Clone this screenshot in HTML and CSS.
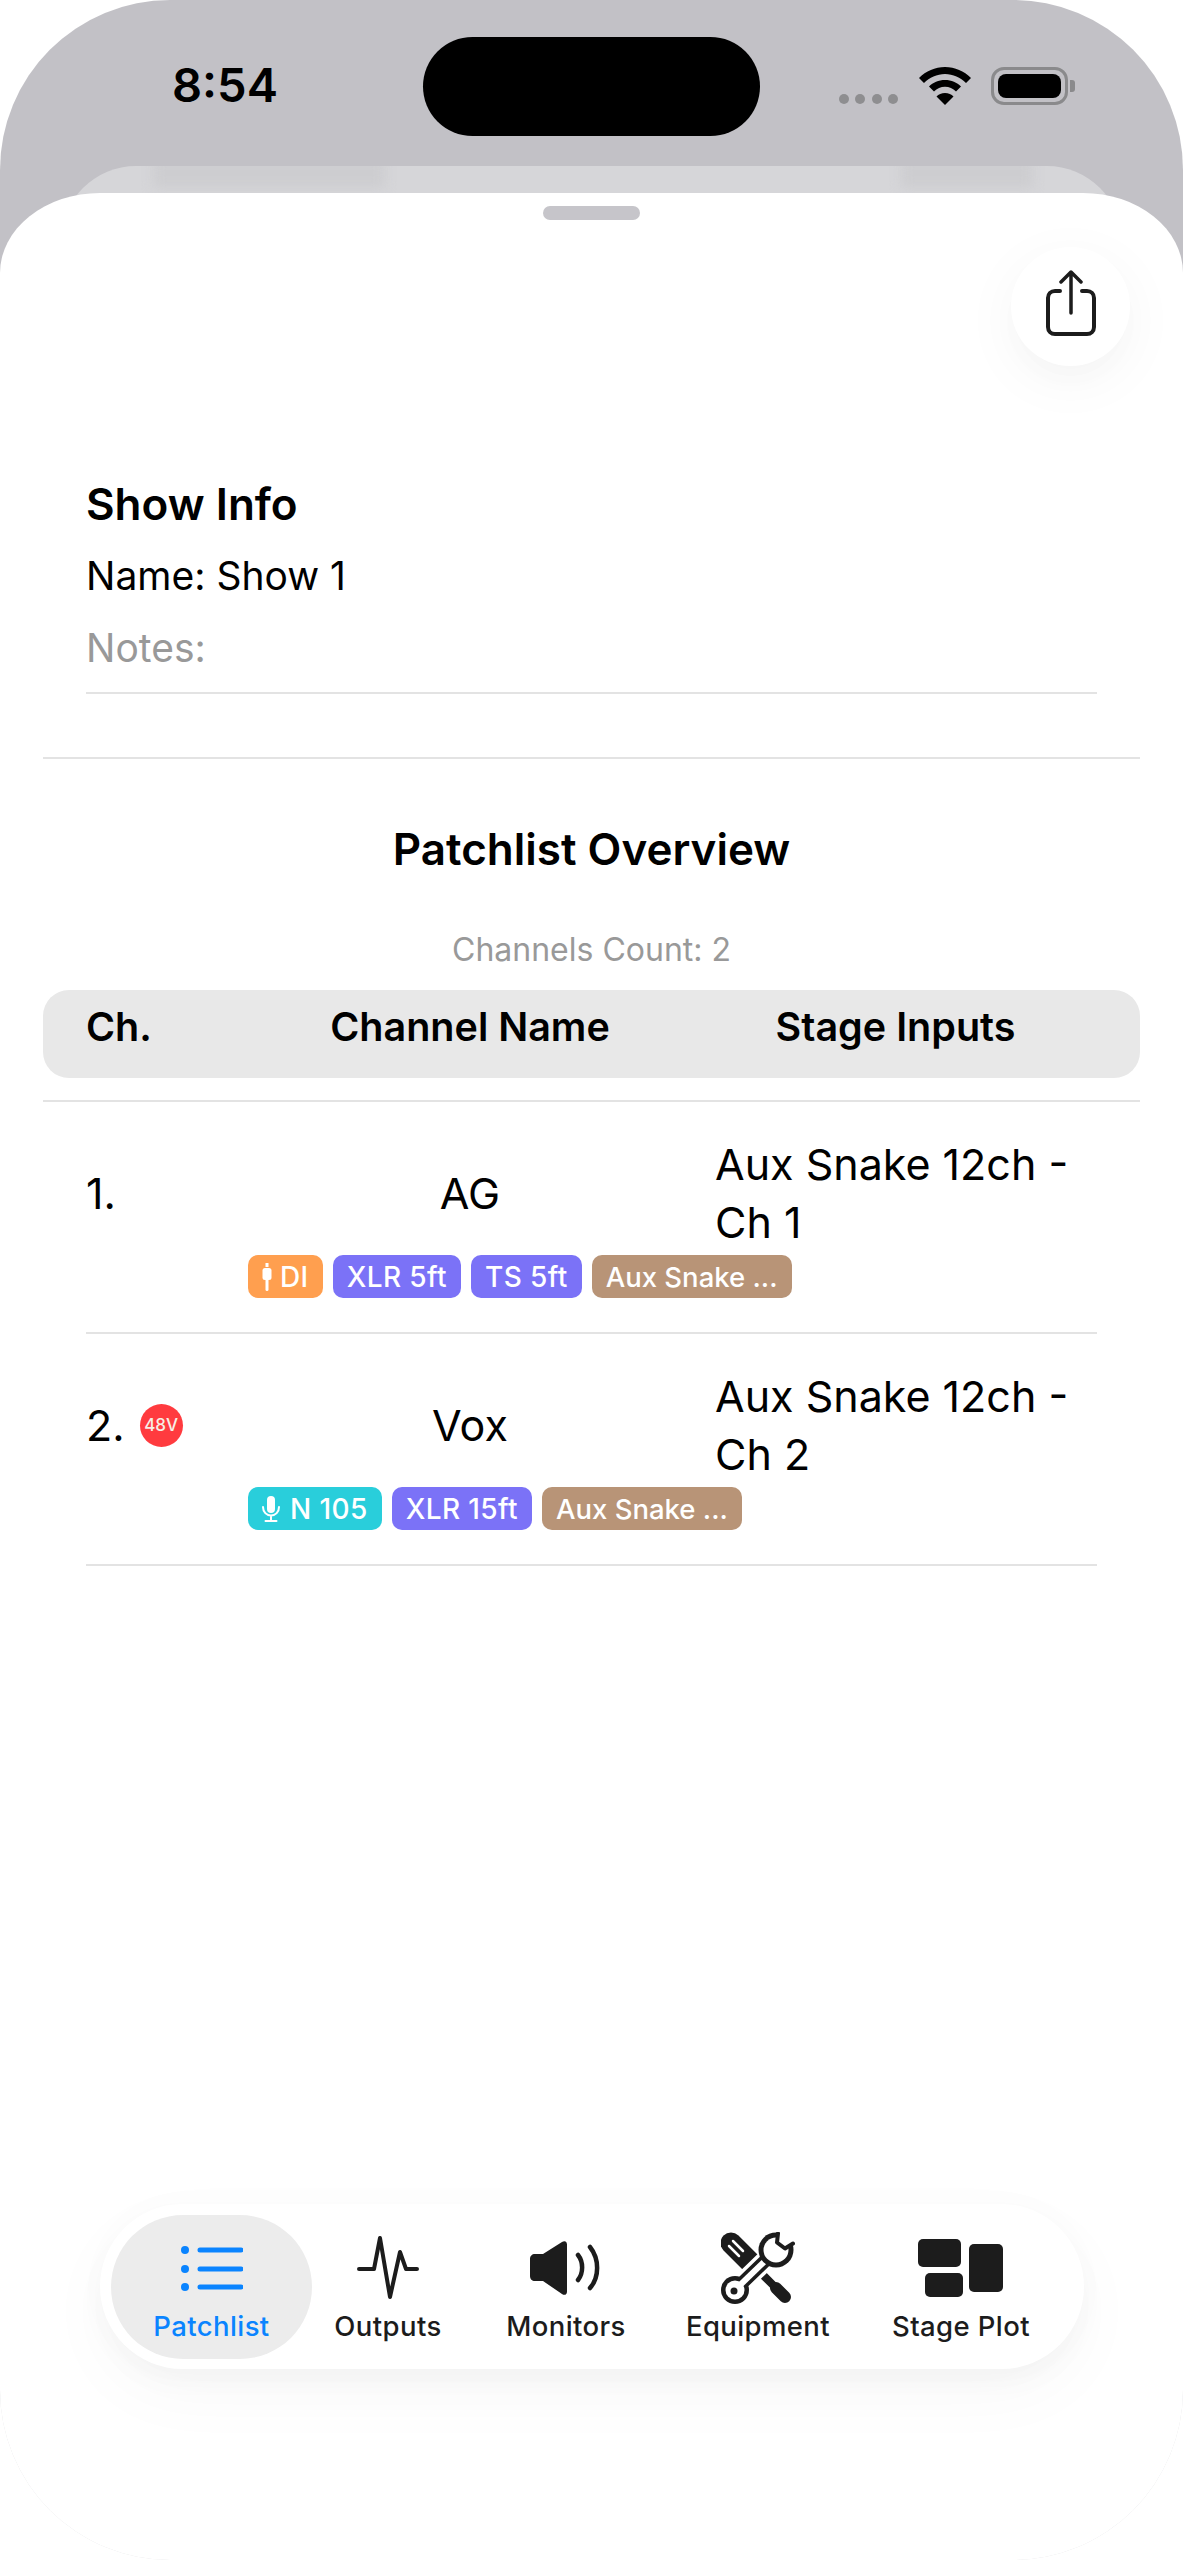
FILE: index.html
```html
<!DOCTYPE html>
<html lang="en">
<head>
  <meta charset="UTF-8" />
  <meta name="viewport" content="width=device-width, initial-scale=1.0" />
  <title>Patchlist Overview</title>
  <link rel="stylesheet" href="styles.css">
</head>
<body>
  <div class="screen">
    <!-- Status bar -->
    <div class="status-bar">
      <div class="time">8:54</div>
      <div class="island"></div>
      <div class="status-icons">
        <svg width="60" height="12" viewBox="0 0 60 12"><g fill="#8e8e90"><circle cx="5" cy="6" r="5"/><circle cx="21" cy="6" r="5"/><circle cx="38" cy="6" r="5"/><circle cx="54" cy="6" r="5"/></g></svg>
        <svg class="wifi" width="52" height="38" viewBox="0 0 52 38"><path d="M26 0C16 0 7 4 0 11l5 5c5.500-5.500 13-9 21-9s15.500 3.500 21 9l5-5C45 4 36 0 26 0z"/><path d="M26 13c-6.500 0-12 2.500-16 6.500l5 5c3-3 6.800-4.700 11-4.700s8 1.700 11 4.700l5-5C38 15.500 32.500 13 26 13z"/><path d="M26 26c-3.500 0-6.500 1.300-8.500 3.500L26 38l8.500-8.500C32.500 27.300 29.500 26 26 26z"/></svg>
        <div class="battery"><div class="battery-fill"></div></div>
        <div class="battery-nub"></div>
      </div>
    </div>

    <!-- Sheet behind the current one -->
    <div class="back-sheet">
      <div class="ghost ghost-left"></div>
      <div class="ghost ghost-right"></div>
    </div>

    <div class="sheet">
      <div class="handle"></div>

      <button class="share" aria-label="Share">
        <svg width="52" height="68" viewBox="0 0 52 68" fill="none" stroke="#1c1c1c" stroke-linecap="round" stroke-linejoin="round">
          <path d="M15 21H10c-4 0-7 3-7 7v29c0 4 3 7 7 7h32c4 0 7-3 7-7V28c0-4-3-7-7-7h-5" stroke-width="4"/>
          <path d="M26 43V3M16 12l10-10 10 10" stroke-width="3.500"/>
        </svg>
      </button>

      <div class="show-info">
        <div class="show-title">Show Info</div>
        <div class="show-line">Name: Show 1</div>
        <div class="show-line muted">Notes:</div>
      </div>

      <div class="divider"></div>

      <h2 class="overview-title">Patchlist Overview</h2>
      <div class="channel-count">Channels Count: 2</div>

      <div class="table-head">
        <div>Ch.</div>
        <div class="center">Channel Name</div>
        <div class="center">Stage Inputs</div>
      </div>
      <div class="table-rule"></div>

      <div class="row">
        <div class="row-main">
          <div class="ch">1.</div>
          <div class="center">AG</div>
          <div class="stage-input">Aux Snake 12ch - Ch 1</div>
        </div>
        <div class="pills">
          <span class="pill orange">
            <svg width="10" height="28" viewBox="0 0 10 28" fill="#fff"><rect x="3.500" y="0" width="3" height="4"/><rect x="0.500" y="5" width="9" height="12" rx="2.500"/><rect x="3.500" y="16" width="3" height="12" rx="1.500"/></svg>
            DI
          </span>
          <span class="pill purple">XLR 5ft</span>
          <span class="pill purple">TS 5ft</span>
          <span class="pill brown">Aux Snake ...</span>
        </div>
      </div>

      <div class="row">
        <div class="row-main">
          <div class="ch">2. <span class="phantom">48V</span></div>
          <div class="center">Vox</div>
          <div class="stage-input">Aux Snake 12ch - Ch 2</div>
        </div>
        <div class="pills">
          <span class="pill cyan">
            <svg width="18" height="26" viewBox="0 0 18 26" fill="none" stroke="#fff" stroke-width="2" stroke-linecap="round"><rect x="5" y="0" width="8" height="17" rx="4" fill="#fff" stroke="none"/><path d="M1 11c0 5 3.500 8.500 8 8.500s8-3.500 8-8.500M9 19.500V25M3.500 25h11"/></svg>
            N 105
          </span>
          <span class="pill purple">XLR 15ft</span>
          <span class="pill brown">Aux Snake ...</span>
        </div>
      </div>
    </div>

    <!-- Floating tab bar -->
    <nav class="tabbar">
      <div class="tab active">
        <div class="tab-icon">
          <svg width="62" height="46" viewBox="0 0 62 46" fill="#0a84ff" stroke="#0a84ff" stroke-linecap="round">
            <g stroke="none"><circle cx="4" cy="5" r="4"/><circle cx="4" cy="24" r="4"/><circle cx="4" cy="42" r="4"/></g>
            <path d="M19 5h41M19 24h41M19 42h41" stroke-width="5"/>
          </svg>
        </div>
        <span>Patchlist</span>
      </div>
      <div class="tab">
        <div class="tab-icon">
          <svg width="62" height="64" viewBox="0 0 62 64" fill="none" stroke="#1c1c1c" stroke-width="4" stroke-linecap="round" stroke-linejoin="round"><path d="M2 33h15l6-31 10 59 10-45 6 17h11"/></svg>
        </div>
        <span>Outputs</span>
      </div>
      <div class="tab">
        <div class="tab-icon">
          <svg width="72" height="56" viewBox="0 0 72 56" fill="#1c1c1c"><path d="M5 14h8L32 2c2.500-1.800 5-.7 5 2.500v47c0 3.200-2.500 4.300-5 2.500L13 41H5c-3 0-5-2-5-5V19c0-3 2-5 5-5z"/><path d="M48 15c5.500 7 5.500 18 0 25M60 7c9.500 12 9.500 30 0 41" fill="none" stroke="#1c1c1c" stroke-width="4.500" stroke-linecap="round"/></svg>
        </div>
        <span>Monitors</span>
      </div>
      <div class="tab">
        <div class="tab-icon">
          <svg width="74" height="72" viewBox="0 0 74 72" fill="none" stroke-linecap="round">
            <path d="M10 11l22 22" stroke="#1c1c1c" stroke-width="21"/>
            <path d="M32 33l20 20" stroke="#1c1c1c" stroke-width="8"/>
            <path d="M55 56l9 9" stroke="#1c1c1c" stroke-width="12"/>
            <path d="M12 9l10 10M8 14l10 10" stroke="#fff" stroke-width="2.500"/>
            <path d="M46 27L14 58" stroke="#fff" stroke-width="20"/>
            <path d="M46 27L14 58" stroke="#1c1c1c" stroke-width="13"/>
            <circle cx="14" cy="58" r="14" fill="#1c1c1c"/>
            <path d="M46 27L14 58" stroke="#fff" stroke-width="6"/>
            <circle cx="14" cy="58" r="9.500" fill="#fff"/>
            <circle cx="13" cy="59" r="3.500" fill="#1c1c1c"/>
            <circle cx="55" cy="18" r="17.500" fill="#1c1c1c"/>
            <circle cx="55" cy="18" r="12.500" fill="#fff"/>
            <path d="M58 -2L73 -2 73 11 66 17 57 11z" fill="#fff"/>
            <path d="M57 1.500l-1 9 8 6 8-5" stroke="#1c1c1c" stroke-width="4" stroke-linejoin="round"/>
          </svg>
        </div>
        <span>Equipment</span>
      </div>
      <div class="tab">
        <div class="tab-icon">
          <svg width="86" height="58" viewBox="0 0 86 58" fill="#1c1c1c"><rect x="0" y="0" width="43" height="28" rx="5"/><rect x="7" y="34" width="38" height="24" rx="5"/><rect x="51" y="5" width="34" height="48" rx="5"/></svg>
        </div>
        <span>Stage Plot</span>
      </div>
    </nav>
  </div>
</body>
</html>
```

FILE: styles.css
```css
/* Reset & Body */
* { box-sizing: border-box; margin: 0; padding: 0; }
html, body { width: 1183px; height: 2560px; background: #fff; overflow: hidden; }
body { font-family: Inter, "Noto Sans", sans-serif; color: #000; }

/* Device */
.screen {
  position: relative;
  width: 1183px; height: 2560px;
  background: linear-gradient(#c2c1c6 300px, #e9e9eb 300px);
  border-radius: 170px;
  overflow: hidden;
}

/* Status bar */
.status-bar {
  display: grid;
  grid-template-columns: 1fr 337px 1fr;
  height: 166px;
  padding-top: 37px;
}
.time {
  height: 99px;
  padding: 0 0 0 172px;
  font-size: 47px; font-weight: 600;
  line-height: 96px;
}
.island { height: 99px; background: #000; border-radius: 50px; }
.status-icons {
  display: flex; align-items: flex-end;
  height: 68px;
  padding-left: 79px;
}
.wifi { margin-left: 20px; }
.battery {
  width: 77px; height: 38px;
  margin-left: 20px;
  padding: 4px;
  border: 3px solid #8a8a8c;
  border-radius: 13px;
}
.battery-fill { width: 100%; height: 100%; background: #000; border-radius: 8px; }
.battery-nub {
  width: 5px; height: 12px;
  margin: 0 0 13px 2px;
  background: #8a8a8c;
  border-radius: 0 3px 3px 0;
}

/* Sheet behind */
.back-sheet {
  position: relative;
  height: 100px;
  margin: 0 61px -73px;
  background: #d6d6d9;
  border-radius: 75px 75px 0 0;
  overflow: hidden;
}
.ghost {
  position: absolute; top: -8px;
  height: 30px;
  background: #cdcdd0;
  filter: blur(6px);
}
.ghost-left { left: 92px; width: 232px; }
.ghost-right { left: 840px; width: 132px; }

/* Sheet */
.sheet {
  position: relative;
  height: 2367px;
  padding-top: 13px;
  background: #fff;
  border-radius: 100px 100px 170px 170px / 80px 80px 170px 170px;
}
.handle {
  width: 97px; height: 14px;
  margin: 0 auto;
  background: #c6c5ca;
  border-radius: 7px;
}
.share {
  position: absolute; top: 54px; right: 53px;
  display: flex; align-items: center; justify-content: center;
  width: 119px; height: 119px;
  padding-bottom: 6px;
  background: #fff;
  border: none;
  border-radius: 50%;
  box-shadow: 0 16px 24px rgba(0,0,0,0.012), 0 14px 60px rgba(0,0,0,0.045);
}

/* Show info */
.show-info {
  margin: 248px 86px 0;
  padding-bottom: 8px;
  border-bottom: 2px solid #e3e3e3;
}
.show-title { font-size: 44px; font-weight: 600; line-height: 72px; }
.show-line { font-size: 39px; line-height: 72px; }
.muted { color: #999; }
.divider { height: 2px; margin: 63px 43px 0; background: #e3e3e3; }

/* Overview */
.overview-title {
  margin-top: 60px;
  font-size: 44px; font-weight: 600;
  line-height: 60px;
  text-align: center;
}
.channel-count {
  margin-top: 51px;
  font-size: 32px;
  line-height: 40px;
  color: #999;
  text-align: center;
}
.table-head {
  display: grid;
  grid-template-columns: 160px 448px 1fr;
  height: 88px;
  margin: 20px 43px 0;
  padding: 17px 43px 0;
  background: #e8e8e8;
  border-radius: 26px;
  font-size: 39.500px; font-weight: 600;
  line-height: 40px;
}
.center { text-align: center; }
.table-rule { height: 2px; margin: 22px 43px 0; background: #e3e3e3; }

/* Rows */
.row {
  margin: 0 86px;
  padding: 33px 0 34px;
  border-bottom: 2px solid #e3e3e3;
}
.row-main {
  display: grid;
  grid-template-columns: 160px 448px 1fr;
  align-items: center;
  font-size: 43px;
  line-height: 58px;
}
.stage-input { padding-left: 21px; }
.ch { display: flex; align-items: center; gap: 15px; }
.phantom {
  display: flex; align-items: center; justify-content: center;
  width: 43px; height: 43px;
  background: #ff3b3f;
  border-radius: 50%;
  font-size: 17px; font-weight: 500;
  line-height: 1;
  color: #f6efe6;
}
.pills {
  display: flex; gap: 10px;
  margin: 4px 0 0 162px;
}
.pill {
  display: flex; align-items: center; gap: 8px;
  height: 43px;
  padding: 0 14px;
  border-radius: 10px;
  font-size: 28px; font-weight: 500;
  letter-spacing: 0.4px;
  color: #fff;
  white-space: nowrap;
}
.orange { background: #ff9f4f; }
.purple { background: #7b72f7; }
.brown { background: #b89477; letter-spacing: 0; font-size: 27.500px; }
.cyan { background: #29cedb; gap: 10px; }

/* Tab bar */
.tabbar {
  position: absolute; top: 2204px; left: 100px;
  display: grid;
  grid-template-columns: 201px 152px 204px 180px 226px;
  width: 984px; height: 165px;
  padding-left: 11px;
  background: #fff;
  border-radius: 83px;
  box-shadow: 0 0 40px rgba(0,0,0,0.015), 0 12px 30px rgba(0,0,0,0.025), 0 24px 70px rgba(0,0,0,0.03);
}
.tab {
  display: flex; flex-direction: column; align-items: center;
  height: 144px;
  margin-top: 11px;
  font-size: 27.500px; font-weight: 500;
  letter-spacing: 0.4px;
  color: #1c1c1c;
}
.tab.active {
  background: #ececec;
  border-radius: 72px;
  color: #0a84ff;
}
.tab-icon {
  display: flex; align-items: center; justify-content: center;
  height: 76px;
  margin-top: 15px;
}
.tab span { margin-top: 4px; line-height: 32px; }
```
